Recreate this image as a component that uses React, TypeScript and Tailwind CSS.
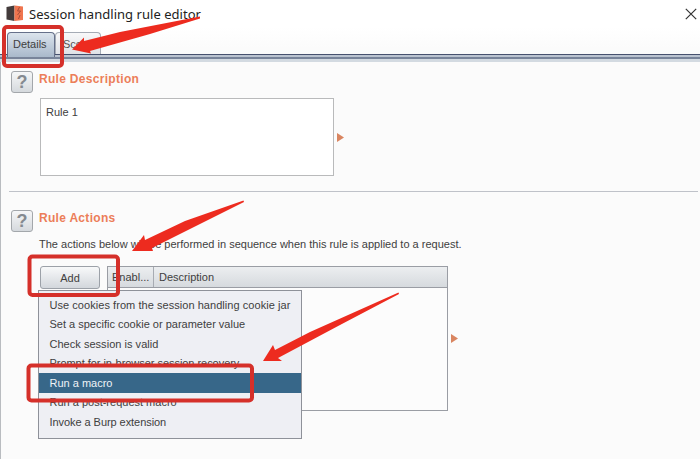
import type { ReactNode } from 'react';

const menuItems = [
  { label: 'Use cookies from the session handling cookie jar', tracking: 'tracking-[0.05px]' },
  { label: 'Set a specific cookie or parameter value', tracking: 'tracking-[0px]' },
  { label: 'Check session is valid', tracking: 'tracking-[0.03px]' },
  { label: 'Prompt for in-browser session recovery', tracking: 'tracking-[-0.04px]' },
  { label: 'Run a macro', tracking: 'tracking-[0px]', selected: true },
  { label: 'Run a post-request macro', tracking: 'tracking-[0px]' },
  { label: 'Invoke a Burp extension', tracking: 'tracking-[-0.06px]' },
];

function HelpButton() {
  return (
    <button className="flex h-[22px] w-[22px] shrink-0 items-center justify-center rounded-[3px] border border-[#a3a7ab] bg-gradient-to-b from-[#f6f7f8] to-[#d5d9dd] text-[18px] font-bold leading-none text-[#858a90]">
      ?
    </button>
  );
}

function Heading({ children }: { children: ReactNode }) {
  return (
    <h2 className="whitespace-nowrap text-[12px] font-bold leading-[16px] tracking-[0.3px] text-[#ec7e59]">{children}</h2>
  );
}

function Pointer() {
  return (
    <svg width="7" height="9" viewBox="0 0 7 9" className="shrink-0">
      <path d="M0 0 L7 4.5 L0 9 Z" fill="#d98560" />
    </svg>
  );
}

function TitleBar() {
  return (
    <header className="flex h-[27px] shrink-0 items-center bg-white pl-[6px] pr-[3px]">
      <svg width="18" height="17" viewBox="0 0 18 17">
        <path d="M0.5 2 L8.5 0.5 V16 L0.5 14.5 Z" fill="#433b3b" />
        <path d="M8.5 0.5 L17 1.5 V15 L8.5 16 Z" fill="#ef754f" />
        <path d="M13.5 2 L11.5 6 H14.5 L11.5 10 M14 10 L12.5 14" stroke="#a84d3a" strokeWidth="1" fill="none" />
      </svg>
      <h1 className="ml-[5px] whitespace-nowrap font-['Noto_Sans','Open_Sans',sans-serif] text-[13px] leading-[18px] tracking-[0.03px] text-[#222]">
        Session handling rule editor
      </h1>
      <svg width="12" height="12" viewBox="0 0 12 12" className="ml-auto">
        <path d="M0.8 0.8 L11.2 11.2 M11.2 0.8 L0.8 11.2" stroke="#333" strokeWidth="1.2" />
      </svg>
    </header>
  );
}

function Tabs() {
  return (
    <nav className="flex h-[27px] shrink-0 items-end bg-gradient-to-b from-white to-[#fafafa] pl-[7px]">
      <div className="z-10 -mb-[3px] flex h-[25px] w-[48px] items-center rounded-t-[4px] border border-b-0 border-[#66708a] bg-gradient-to-b from-[#dce4ed] to-[#a9b9cb] pb-[2px] pl-[5px]">
        Details
      </div>
      <div className="flex h-[22px] w-[46px] items-center rounded-t-[4px] border border-b-0 border-[#a5abb5] bg-gradient-to-b from-[#f8f8f9] to-[#dfe2e7] pl-[7px] text-[#555]">
        Scope
      </div>
    </nav>
  );
}

function Annotations() {
  return (
    <svg width="700" height="459" viewBox="0 0 700 459" className="pointer-events-none absolute left-0 top-0">
      <g fill="none" stroke="#d5302a" strokeWidth="4">
        <rect x="4" y="27" width="58" height="39" rx="3" />
        <rect x="29.5" y="256.5" width="88.5" height="38.5" rx="3" />
        <rect x="28.5" y="365.5" width="223.5" height="35" rx="3" />
      </g>
      <g fill="#ed2b1f">
        <path d="M72 49.5 L84 37.5 L84 41 L120 32 L200 16.5 L200 18.5 L150 34 L90 51 L91 53.5 Z" />
        <path d="M132 251 L144 235 L145 240 L185 221 L243.5 200.5 L244 202 L190 229 L152 248 L153 251 Z" />
        <path d="M263 361 L273 345 L275 350 L310 332 L398.5 292.5 L399 294 L340 325 L278 358 L282 361 Z" />
      </g>
    </svg>
  );
}

export default function App() {
  return (
    <main className="relative flex h-[459px] w-[700px] flex-col overflow-hidden bg-[#fbfbfb] font-['Liberation_Sans',Arial,sans-serif] text-[11px] leading-[14px] text-[#404040]">
      <TitleBar />
      <Tabs />
      <div className="shrink-0">
        <div className="h-px bg-[#46516e]" />
        <div className="h-[2px] bg-[#bac3d0]" />
        <div className="h-[2px] bg-[#78849a]" />
        <div className="h-[3px] bg-[#d3dae1]" />
      </div>
      <div className="flex-1 border-l border-[#b9bcc0] pl-[8px] pr-[2px]">
        <section className="flex h-[130px] border-b border-[#bfc2c9] pl-[2px] pt-[9px]">
          <HelpButton />
          <div className="ml-[6px]">
            <Heading>Rule Description</Heading>
            <div className="ml-px mt-[11px] flex items-center">
              <div className="h-[78px] w-[294px] border border-[#b9babb] bg-white px-[5px] pt-[6px]">Rule 1</div>
              <div className="ml-[3px]"><Pointer /></div>
            </div>
          </div>
        </section>
        <section className="flex pl-[2px] pt-[18px]">
          <HelpButton />
          <div className="ml-[6px]">
            <Heading>Rule Actions</Heading>
            <p className="mt-[11px] whitespace-nowrap">
              The actions below will be performed in sequence when this rule is applied to a request.
            </p>
            <div className="relative mt-[15px] flex">
              <button className="ml-[1px] h-[23px] w-[60px] rounded-[3px] border border-[#9ca1a8] bg-gradient-to-b from-[#f8f9fa] to-[#d3d7dc]">
                Add
              </button>
              <div className="ml-[7px] h-[145px] w-[341px] shrink-0 border border-[#9a9da4] bg-[#fcfcfc]">
                <div className="flex h-[21px] items-center border-b border-[#9a9da4] bg-gradient-to-b from-[#eceef0] to-[#d6dade]">
                  <span className="flex h-full w-[46px] items-center border-r border-[#a7abb2] pl-[4px]">Enabl...</span>
                  <span className="pl-[5px]">Description</span>
                </div>
              </div>
              <div className="ml-[3px] self-center"><Pointer /></div>
              <ul className="absolute left-[-1px] top-[24px] h-[149px] w-[264px] border border-[#8e9199] bg-[#eeeff4] pt-[4px]">
                {menuItems.map((item) => (
                  <li
                    key={item.label}
                    className={`flex h-[19.5px] items-center whitespace-nowrap pl-[10.5px] ${item.tracking} ${item.selected ? 'bg-[#376789] text-[#eef3f7]' : ''}`}
                  >
                    {item.label}
                  </li>
                ))}
              </ul>
            </div>
          </div>
        </section>
      </div>
      <Annotations />
    </main>
  );
}
